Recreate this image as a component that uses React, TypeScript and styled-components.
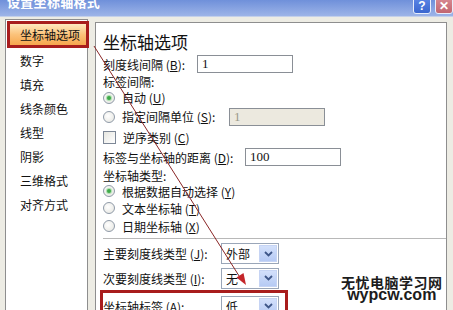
import React from "react";
import styled, { createGlobalStyle } from "styled-components";

const Global = createGlobalStyle`
  html, body { margin: 0; padding: 0; }
  body {
    width: 453px; height: 310px; overflow: hidden;
    background: #edece4;
    font-family: "Noto Sans CJK SC", "Noto Sans", sans-serif;
    font-size: 12px; color: #111;
  }
`;

const Window = styled.div`
  position: relative;
  width: 453px; height: 310px; overflow: hidden;
  display: flex; flex-direction: column;
`;

const TitleBar = styled.div`
  height: 16px; flex: none;
  background: linear-gradient(#6f90da, #9db4e8);
  border-bottom: 1px solid #c4d0ea;
  display: flex; align-items: flex-start; justify-content: space-between;
  overflow: hidden;
`;

const TitleText = styled.div`
  color: #fff; font-weight: bold; font-size: 13px; line-height: 16px;
  margin: -6px 0 0 7px; letter-spacing: 0.3px;
`;

const TitleButtons = styled.div`
  display: flex; gap: 4px; margin-top: -3px;
`;

const CapButton = styled.div<{ $kind: "help" | "close" }>`
  width: 18px; height: 17px; border-radius: 3px;
  border: 1px solid #e8eefb;
  background: ${(p) => (p.$kind === "help" ? "linear-gradient(#5c86e6, #3a66cf)" : "linear-gradient(#d98a92, #c16670)")};
  color: #fff; font: bold 12px "Liberation Sans", sans-serif;
  display: flex; align-items: center; justify-content: center;
  box-sizing: border-box;
`;

const Body = styled.div`
  flex: 1; display: flex; align-items: flex-start;
  padding: 2px 0 0 5px;
`;

const LeftPanel = styled.div`
  width: 83px; height: 300px; box-sizing: border-box;
  background: #fff; border: 1px solid #8e8e8e;
  padding: 1px 0 0 1px;
  display: flex; flex-direction: column;
`;

const NavItem = styled.div<{ $sel?: boolean }>`
  height: ${(p) => (p.$sel ? 27 : 24)}px; box-sizing: border-box;
  display: flex; align-items: center;
  padding-left: ${(p) => (p.$sel ? 10 : 13)}px;
  font-size: 12px; color: #111;
  ${(p) =>
    p.$sel
      ? `border: 3px solid #a81d1d; width: 82px;
         background: linear-gradient(#ffe9c0, #fbc27a 50%, #f6a64d);`
      : ""}
`;

const RightPanel = styled.div`
  margin: 3px 0 0 7px;
  width: 352px; height: 300px; box-sizing: border-box;
  background: #fff; border: 1px solid #8e8e8e;
  padding: 4px 0 0 7px;
  display: flex; flex-direction: column;
`;

const Heading = styled.div`
  height: 28px; display: flex; align-items: center;
  font-size: 17px; color: #111;
`;

const Row = styled.div<{ $h: number; $mt?: number }>`
  height: ${(p) => p.$h}px; flex: none;
  margin-top: ${(p) => p.$mt ?? 0}px;
  display: flex; align-items: center;
`;

const Label = styled.span<{ $w?: number }>`
  ${(p) => (p.$w ? `width: ${p.$w}px; flex: none;` : "")}
  white-space: nowrap;
`;

const U = styled.span`
  text-decoration: underline;
`;

const TextBox = styled.div<{ $w: number; $disabled?: boolean }>`
  width: ${(p) => p.$w}px; height: 18px; box-sizing: border-box;
  border: 1px solid #8a8f96;
  background: ${(p) => (p.$disabled ? "#ece9df" : "#fff")};
  color: ${(p) => (p.$disabled ? "#9a9a8a" : "#111")};
  font-family: "Liberation Serif", serif; font-size: 13px;
  display: flex; align-items: center; padding-left: 4px;
`;

const Radio = styled.span<{ $on?: boolean }>`
  width: 12px; height: 12px; border-radius: 50%; flex: none;
  box-sizing: border-box; border: 1px solid #8f9aa8;
  background: radial-gradient(circle at 40% 40%, #ffffff, #e4e4de);
  margin-right: 7px;
  display: flex; align-items: center; justify-content: center;
  &::after {
    content: "";
    width: 4px; height: 4px; border-radius: 50%;
    background: ${(p) => (p.$on ? "#3fa94a" : "transparent")};
    box-shadow: ${(p) => (p.$on ? "0 0 1px 1px #a7dca9" : "none")};
  }
`;

const Check = styled.span`
  width: 13px; height: 13px; flex: none; box-sizing: border-box;
  border: 1px solid #7d8796; background: linear-gradient(135deg, #e6e6e0, #fff);
  margin-right: 7px;
`;

const Separator = styled.div`
  height: 1px; background: #b8b8b8; margin-top: 3px; flex: none;
`;

const Select = styled.div`
  width: 58px; height: 21px; box-sizing: border-box;
  border: 1px solid #9aa6b8; background: #fff;
  display: flex; align-items: center; justify-content: space-between;
  padding: 1px 1px 1px 4px; font-size: 12px;
`;

const DropBtn = styled.span`
  width: 18px; height: 17px; box-sizing: border-box;
  background: linear-gradient(#d3e0fb, #b6caf4);
  border: 1px solid #c6d4f4;
  display: flex; align-items: center; justify-content: center;
`;

const Highlight = styled.div`
  margin-left: -3px; width: 188px; box-sizing: border-box;
  border: 3px solid #a81d1d; border-bottom: none;
  flex: none;
`;

const Overlay = styled.svg`
  position: absolute; left: 0; top: 0; pointer-events: none;
`;

const Watermark = styled.div`
  position: absolute; left: 341px; top: 276px;
  display: flex; flex-direction: column; align-items: center;
  color: #1c1c1c; font-weight: bold;
`;

const WmCn = styled.div`
  font-size: 14px; letter-spacing: 0.5px; line-height: 13px; height: 13px;
  font-family: "Noto Sans CJK SC", sans-serif;
`;

const WmEn = styled.div`
  font-size: 16px; line-height: 12px; height: 12px;
  font-family: "Liberation Sans", Arial, sans-serif;
`;

const Chevron = () => (
  <svg width="9" height="6" viewBox="0 0 9 6">
    <path d="M1 1 L4.5 4.5 L8 1" fill="none" stroke="#3e5688" strokeWidth="1.8" />
  </svg>
);

const SelectBox = ({ value }: { value: string }) => (
  <Select>
    <span>{value}</span>
    <DropBtn>
      <Chevron />
    </DropBtn>
  </Select>
);

const navItems = ["数字", "填充", "线条颜色", "线型", "阴影", "三维格式", "对齐方式"];

export default function App() {
  return (
    <Window>
      <Global />
      <TitleBar>
        <TitleText>设置坐标轴格式</TitleText>
        <TitleButtons>
          <CapButton $kind="help">?</CapButton>
          <CapButton $kind="close">✕</CapButton>
        </TitleButtons>
      </TitleBar>
      <Body>
        <LeftPanel>
          <NavItem $sel>坐标轴选项</NavItem>
          {navItems.map((n) => (
            <NavItem key={n}>{n}</NavItem>
          ))}
        </LeftPanel>
        <RightPanel>
          <Heading>坐标轴选项</Heading>
          <Row $h={18}>
            <Label $w={94}>
              刻度线间隔 (<U>B</U>):
            </Label>
            <TextBox $w={96}>1</TextBox>
          </Row>
          <Row $h={16}>
            <Label>标签间隔:</Label>
          </Row>
          <Row $h={17}>
            <Radio $on />
            <Label>
              自动 (<U>U</U>)
            </Label>
          </Row>
          <Row $h={21}>
            <Radio />
            <Label $w={107}>
              指定间隔单位 (<U>S</U>):
            </Label>
            <TextBox $w={96} $disabled>
              1
            </TextBox>
          </Row>
          <Row $h={20}>
            <Check />
            <Label>
              逆序类别 (<U>C</U>)
            </Label>
          </Row>
          <Row $h={20}>
            <Label $w={142}>
              标签与坐标轴的距离 (<U>D</U>):
            </Label>
            <TextBox $w={96}>100</TextBox>
          </Row>
          <Row $h={16}>
            <Label>坐标轴类型:</Label>
          </Row>
          <Row $h={16}>
            <Radio $on />
            <Label>
              根据数据自动选择 (<U>Y</U>)
            </Label>
          </Row>
          <Row $h={18}>
            <Radio />
            <Label>
              文本坐标轴 (<U>T</U>)
            </Label>
          </Row>
          <Row $h={18}>
            <Radio />
            <Label>
              日期坐标轴 (<U>X</U>)
            </Label>
          </Row>
          <Separator />
          <Row $h={25} $mt={2}>
            <Label $w={118}>
              主要刻度线类型 (<U>J</U>):
            </Label>
            <SelectBox value="外部" />
          </Row>
          <Row $h={24}>
            <Label $w={118}>
              次要刻度线类型 (<U>I</U>):
            </Label>
            <SelectBox value="无" />
          </Row>
          <Highlight>
            <Row $h={26}>
              <Label $w={118}>
                坐标轴标签 (<U>A</U>):
              </Label>
              <SelectBox value="低" />
            </Row>
          </Highlight>
        </RightPanel>
      </Body>
      <Overlay width="453" height="310" viewBox="0 0 453 310">
        <line x1="94" y1="46" x2="241" y2="279" stroke="#8a2626" strokeWidth="1" />
        <polygon points="246,285 236.5,277.5 243.5,273" fill="#c4262a" />
      </Overlay>
      <Watermark>
        <WmCn>无忧电脑学习网</WmCn>
        <WmEn>wypcw.com</WmEn>
      </Watermark>
    </Window>
  );
}
